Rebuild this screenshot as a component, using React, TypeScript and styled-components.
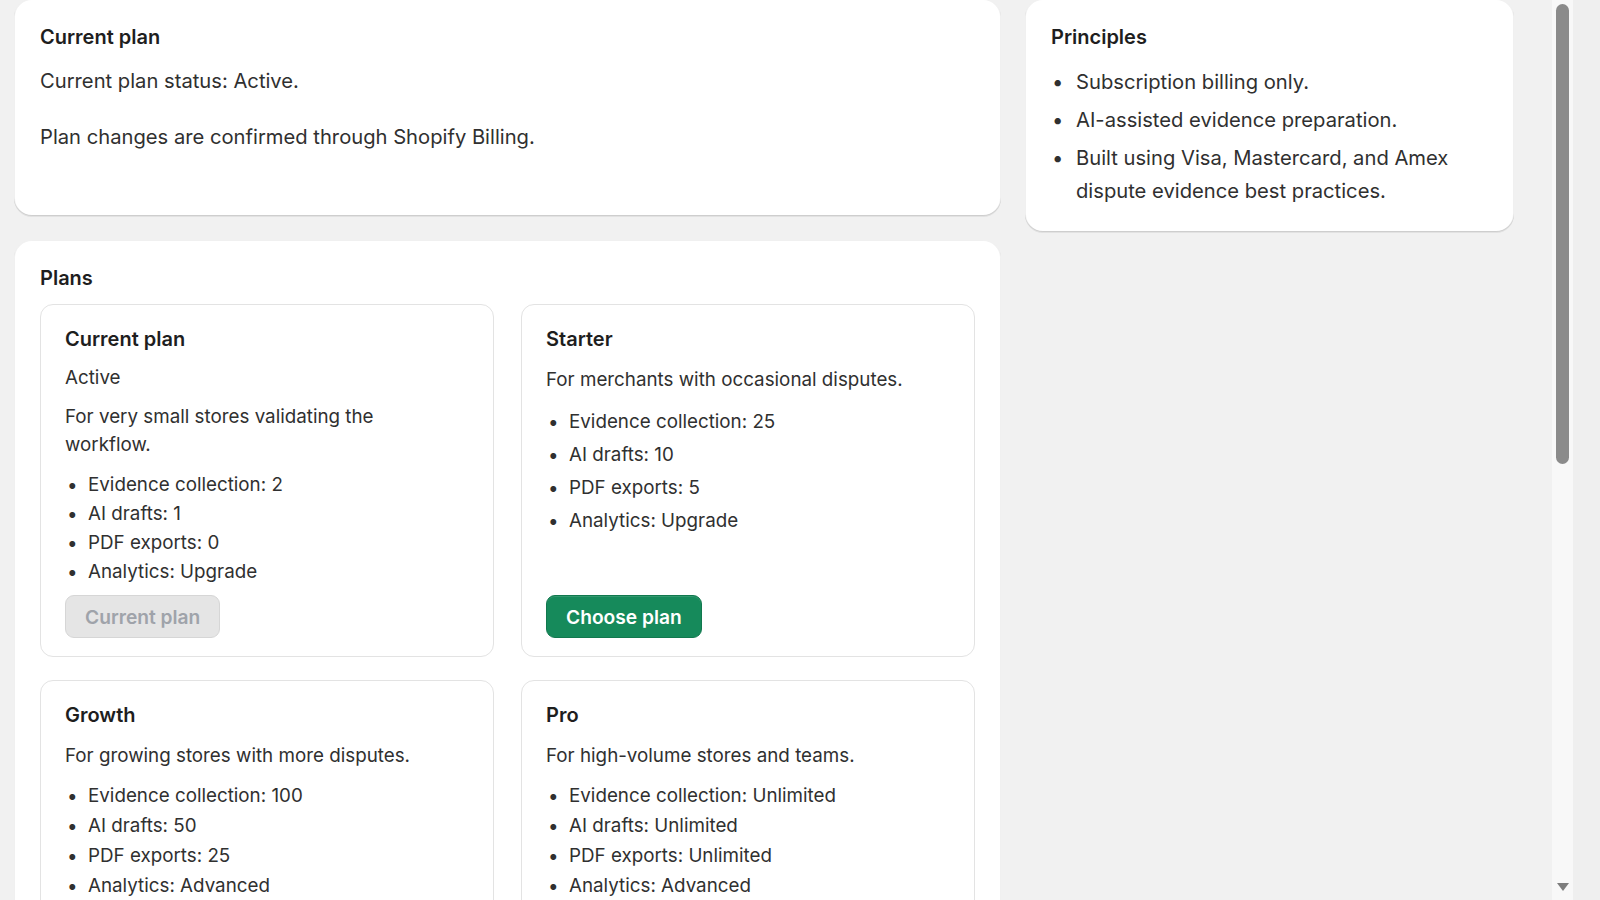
import React, { useLayoutEffect, useRef } from 'react';
import styled, { createGlobalStyle } from 'styled-components';

const GlobalStyle = createGlobalStyle`
	html, body {
		margin: 0;
		padding: 0;
		height: 100%;
		overflow: hidden;
		background: #efefef;
	}
	body {
		font-family: Inter, "Noto Sans", "Liberation Sans", sans-serif;
		color: #303030;
		-webkit-font-smoothing: antialiased;
	}
`;

const Frame = styled.div`
	display: flex;
	height: 900px;
	width: 1600px;
`;

const Viewport = styled.div`
	flex: 0 0 1552px;
	height: 900px;
	overflow: hidden;
	background: #f1f1f1;
`;

const Page = styled.div`
	padding: 17px 38px 40px 14px;
	display: grid;
	grid-template-columns: 987px 489px;
	column-gap: 24px;
	align-items: start;
`;

const Column = styled.div`
	display: flex;
	flex-direction: column;
	gap: 24px;
`;

const Card = styled.section<{ $minHeight?: number }>`
	background: #fff;
	border-radius: 18px;
	padding: 24px 26px 25px;
	box-shadow:
		0 1px 0 rgba(26, 26, 26, 0.07),
		inset 0 -1px 0 rgba(0, 0, 0, 0.14),
		inset 0 0 0 1px rgba(0, 0, 0, 0.06);
	min-height: ${(p) => (p.$minHeight ? `${p.$minHeight}px` : 'auto')};
	box-sizing: border-box;
`;

const CardTitle = styled.h2`
	margin: 0;
	font-size: 20px;
	line-height: 28px;
	font-weight: 600;
	color: #1e1e1e;
`;

const Body = styled.p<{ $gap?: number }>`
	margin: ${(p) => p.$gap ?? 15}px 0 0;
	font-size: 20.2px;
	line-height: 29px;
`;

const Principles = styled.ul`
	margin: 14px 0 0;
	padding-left: 25px;
	list-style: none;
	font-size: 20.2px;
	line-height: 33px;

	li {
		position: relative;
	}

	li::before {
		content: '•';
		position: absolute;
		left: -24px;
	}

	li + li {
		margin-top: 5px;
	}
`;

const PlanGrid = styled.div`
	margin-top: 12px;
	display: grid;
	grid-template-columns: 1fr 1fr;
	column-gap: 27px;
	row-gap: 23px;
`;

const PlanCard = styled.article`
	display: flex;
	flex-direction: column;
	border: 1px solid #e3e3e3;
	border-radius: 13px;
	padding: 20px 24px 18px;
	background: #fff;
`;

const PlanName = styled.h3`
	margin: 0;
	font-size: 20px;
	line-height: 28px;
	font-weight: 600;
	color: #1e1e1e;
`;

const PlanText = styled.p<{ $gap?: number }>`
	margin: ${(p) => p.$gap ?? 11}px 0 0;
	font-size: 18.8px;
	line-height: 28px;
	max-width: 375px;
`;

const Limits = styled.ul<{ $row: number }>`
	margin: 11px 0 9px;
	padding-left: 23px;
	list-style: none;
	font-size: 18.8px;
	line-height: ${(p) => p.$row}px;

	li {
		position: relative;
	}

	li::before {
		content: '•';
		position: absolute;
		left: -21px;
	}
`;

const PlanButton = styled.button<{ $current?: boolean }>`
	margin-top: auto;
	align-self: flex-start;
	height: 43px;
	padding: 0 19px;
	border-radius: 9px;
	font-family: inherit;
	font-size: 19.2px;
	font-weight: 600;
	cursor: ${(p) => (p.$current ? 'default' : 'pointer')};
	color: ${(p) => (p.$current ? '#9fa3aa' : '#fff')};
	background: ${(p) => (p.$current ? '#e5e5e5' : '#168a5b')};
	border: 1px solid ${(p) => (p.$current ? '#d6d6d6' : '#11784e')};
	box-shadow: ${(p) =>
		p.$current ? 'none' : 'inset 0 1px 0 rgba(255, 255, 255, 0.12)'};
`;

const ScrollTrack = styled.div`
	flex: 0 0 21px;
	height: 900px;
	background: #f8f8f8;
	display: flex;
	flex-direction: column;
	align-items: center;
`;

const ScrollThumb = styled.div`
	margin-top: 4px;
	width: 13px;
	height: 460px;
	border-radius: 7px;
	background: #8b8b8b;
`;

const ScrollArrow = styled.div`
	margin-top: auto;
	margin-bottom: 9px;
	width: 0;
	height: 0;
	border-left: 6px solid transparent;
	border-right: 6px solid transparent;
	border-top: 8px solid #7d7d7d;
`;

type Plan = {
	name: string;
	status?: string;
	blurb: string;
	limits: string[];
	row: number;
	current?: boolean;
};

const plans: Plan[] = [
	{
		name: 'Current plan',
		status: 'Active',
		blurb: 'For very small stores validating the workflow.',
		limits: [
			'Evidence collection: 2',
			'AI drafts: 1',
			'PDF exports: 0',
			'Analytics: Upgrade',
		],
		row: 29,
		current: true,
	},
	{
		name: 'Starter',
		blurb: 'For merchants with occasional disputes.',
		limits: [
			'Evidence collection: 25',
			'AI drafts: 10',
			'PDF exports: 5',
			'Analytics: Upgrade',
		],
		row: 33,
	},
	{
		name: 'Growth',
		blurb: 'For growing stores with more disputes.',
		limits: [
			'Evidence collection: 100',
			'AI drafts: 50',
			'PDF exports: 25',
			'Analytics: Advanced',
		],
		row: 30,
	},
	{
		name: 'Pro',
		blurb: 'For high-volume stores and teams.',
		limits: [
			'Evidence collection: Unlimited',
			'AI drafts: Unlimited',
			'PDF exports: Unlimited',
			'Analytics: Advanced',
		],
		row: 30,
	},
];

const PlanTile: React.FC<{ plan: Plan }> = ({ plan }) => (
	<PlanCard>
		<PlanName>{plan.name}</PlanName>
		{plan.status && <PlanText>{plan.status}</PlanText>}
		<PlanText $gap={plan.status ? 11 : 13}>{plan.blurb}</PlanText>
		<Limits $row={plan.row}>
			{plan.limits.map((l) => (
				<li key={l}>{l}</li>
			))}
		</Limits>
		<PlanButton $current={plan.current} disabled={plan.current}>
			{plan.current ? 'Current plan' : 'Choose plan'}
		</PlanButton>
	</PlanCard>
);

export default function App() {
	const viewRef = useRef<HTMLDivElement>(null);

	// the billing page opens slightly scrolled past the top padding
	useLayoutEffect(() => {
		if (viewRef.current) viewRef.current.scrollTop = 18;
	}, []);

	return (
		<>
			<GlobalStyle />
			<Frame>
				<Viewport ref={viewRef}>
					<Page>
						<Column>
							<Card $minHeight={217}>
								<CardTitle>Current plan</CardTitle>
								<Body>Current plan status: Active.</Body>
								<Body $gap={27}>
									Plan changes are confirmed through Shopify Billing.
								</Body>
							</Card>
							<Card>
								<CardTitle>Plans</CardTitle>
								<PlanGrid>
									{plans.map((p) => (
										<PlanTile key={p.name} plan={p} />
									))}
								</PlanGrid>
							</Card>
						</Column>
						<Column>
							<Card>
								<CardTitle>Principles</CardTitle>
								<Principles>
									<li>Subscription billing only.</li>
									<li>AI-assisted evidence preparation.</li>
									<li>
										Built using Visa, Mastercard, and Amex dispute evidence
										best practices.
									</li>
								</Principles>
							</Card>
						</Column>
					</Page>
				</Viewport>
				<ScrollTrack>
					<ScrollThumb />
					<ScrollArrow />
				</ScrollTrack>
			</Frame>
		</>
	);
}
